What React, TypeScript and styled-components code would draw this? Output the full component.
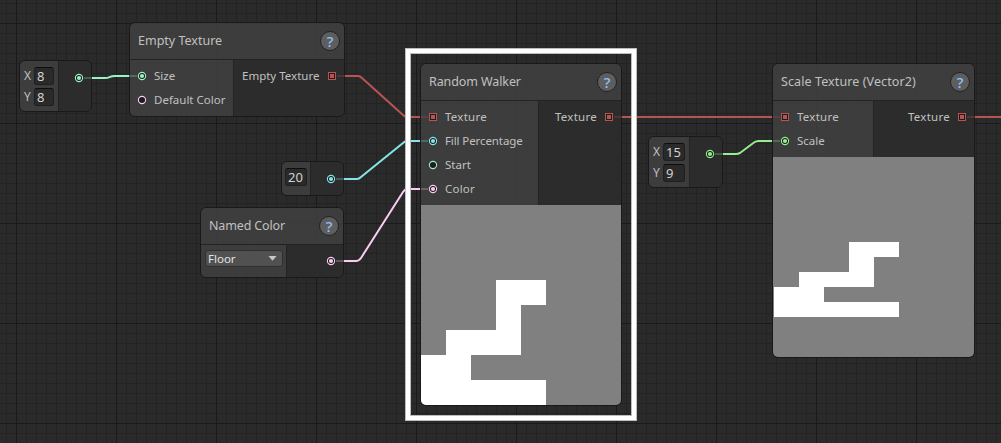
import React from "react";
import styled, { createGlobalStyle } from "styled-components";

const GlobalStyle = createGlobalStyle`
  *, *::before { box-sizing: border-box; }
  body { margin: 0; background: #292929; overflow: hidden; }
`;

const line = "#191919";

const Canvas = styled.main`
  position: relative;
  width: 1001px;
  height: 443px;
  overflow: hidden;
  font-family: "Noto Sans", "Open Sans", sans-serif;
  font-size: 11.5px;
  color: #c0c0c0;
  background-color: #2a2a2a;
  background-image:
    linear-gradient(90deg, #1a1a1a 1px, transparent 1px),
    linear-gradient(#1a1a1a 1px, transparent 1px),
    linear-gradient(90deg, #232323 1px, transparent 1px),
    linear-gradient(#232323 1px, transparent 1px);
  background-size: 100px 100px, 100px 100px, 10px 10px, 10px 10px;
  background-position: 16px 23px, 16px 23px, 6px 3px, 6px 3px;
`;

const Wires = styled.svg`
  position: absolute;
  inset: 0;
`;

const NodeBox = styled.section<{ $x: number; $y: number; $w: number; $h: number }>`
  position: absolute;
  left: ${(p) => p.$x}px;
  top: ${(p) => p.$y}px;
  width: ${(p) => p.$w}px;
  height: ${(p) => p.$h}px;
  display: flex;
  flex-direction: column;
  overflow: hidden;
  border: 1px solid ${line};
  border-radius: 6px;
`;

const Header = styled.header`
  display: flex;
  align-items: center;
  justify-content: space-between;
  flex: none;
  height: 37px;
  padding: 0 4px 0 8px;
  background: rgba(62, 62, 62, 0.93);
  border-bottom: 1px solid #232323;
`;

const Label = styled.span<{ $w: number; $size?: number; $track?: number }>`
  width: ${(p) => p.$w}px;
  font-size: ${(p) => p.$size ?? 11.5}px;
  letter-spacing: ${(p) => p.$track ?? 0}px;
  line-height: 16px;
  white-space: nowrap;
`;

const Help = styled.span`
  display: flex;
  align-items: center;
  justify-content: center;
  width: 20px;
  height: 20px;
  border: 1px solid #222;
  border-radius: 50%;
  background: #5e5e5e;
  color: #8fc0fb;
  font-size: 15px;
  font-weight: 500;
  line-height: 18px;
`;

const Body = styled.div<{ $h?: number }>`
  display: flex;
  flex: ${(p) => (p.$h ? `0 0 ${p.$h}px` : "1")};
`;

const Inputs = styled.div<{ $w: number; $pad?: string }>`
  display: flex;
  flex-direction: column;
  flex: none;
  width: ${(p) => p.$w}px;
  padding: ${(p) => p.$pad ?? "4px 0 0 7px"};
  background: rgba(62, 62, 62, 0.93);
  border-right: 1px solid #232323;
`;

const Outputs = styled.div<{ $top?: number }>`
  display: flex;
  flex-direction: column;
  align-items: flex-end;
  flex: 1;
  padding: ${(p) => p.$top ?? 4}px 7px 0 0;
  background: rgba(45, 45, 45, 0.96);
`;

const PortRow = styled.div`
  display: flex;
  align-items: center;
  gap: 7px;
  height: 24px;
`;

const PortIcon = styled.svg`
  display: block;
  flex: none;
  width: 10px;
  height: 10px;
`;

const Field = styled.span<{ $w: number }>`
  display: block;
  width: ${(p) => p.$w}px;
  height: 18px;
  padding-left: 2px;
  border: 1px solid #1f1f1f;
  border-top-color: #0d0d0d;
  border-radius: 3px;
  background: #2a2a2a;
  color: #d2d2d2;
  font-size: 13px;
  line-height: 17px;
`;

const FieldRow = styled.div`
  display: flex;
  align-items: flex-start;
  height: 21px;
`;

const Axis = styled.span`
  width: 10px;
  font-size: 12px;
  line-height: 18px;
`;

const Select = styled.div`
  display: flex;
  align-items: center;
  justify-content: space-between;
  width: 78px;
  height: 17px;
  padding: 0 5px 0 2px;
  border: 1px solid #303030;
  border-radius: 3px;
  background: #515151;
  color: #e4e4e4;
`;

const Preview = styled.svg`
  display: block;
  flex: none;
`;

const SelectionFrame = styled.div`
  position: absolute;
  left: 405px;
  top: 48px;
  width: 232px;
  height: 373px;
  border: 1px solid #bdbdbd;
  pointer-events: none;
  &::before {
    content: "";
    display: block;
    height: 100%;
    border: 4px solid #fff;
    outline: 1px solid #bdbdbd;
    outline-offset: -5px;
  }
`;

const red = "#b85353";
const cyan = "#84e4e7";
const mint = "#9cf0c6";
const pink = "#fbcbf4";
const green = "#95ed8d";

type PortProps = { color: string; square?: boolean; empty?: boolean };
type TextProps = { text: string; w: number; track?: number };

function Port({ color, square, empty }: PortProps) {
  return (
    <PortIcon viewBox="0 0 10 10">
      {square ? (
        <>
          <rect x="1.5" y="1.5" width="7" height="7" fill="#1d1d1d" stroke={color} />
          <rect x="3" y="3" width="4" height="4" fill={color} />
        </>
      ) : (
        <>
          <circle cx="5" cy="5" r="3.6" fill="#1d1d1d" stroke={color} strokeWidth="1.1" />
          {!empty && <circle cx="5" cy="5" r="2.1" fill={color} />}
        </>
      )}
    </PortIcon>
  );
}

function Title({ text, w, track }: TextProps) {
  return (
    <Header>
      <Label $w={w} $size={12.5} $track={track}>{text}</Label>
      <Help>?</Help>
    </Header>
  );
}

function Input({ text, w, track, ...port }: PortProps & TextProps) {
  return (
    <PortRow>
      <Port {...port} />
      <Label $w={w} $track={track}>{text}</Label>
    </PortRow>
  );
}

function Output({ text, w, track }: TextProps) {
  return (
    <PortRow>
      <Label $w={w} $track={track}>{text}</Label>
      <Port color={red} square />
    </PortRow>
  );
}

function VectorNode(p: { x: number; y: number; w: number; split: number; field: number; a: string; b: string; color: string; h: number }) {
  return (
    <NodeBox $x={p.x} $y={p.y} $w={p.w} $h={p.h}>
      <Body>
        <Inputs $w={p.split} $pad="6px 0 0 4px">
          <FieldRow><Axis>X</Axis><Field $w={p.field}>{p.a}</Field></FieldRow>
          <FieldRow><Axis>Y</Axis><Field $w={p.field}>{p.b}</Field></FieldRow>
        </Inputs>
        <Outputs $top={5}>
          <PortRow><Port color={p.color} /></PortRow>
        </Outputs>
      </Body>
    </NodeBox>
  );
}

const wires = [
  { color: mint, inside: "M84 78H92M129 76H137", main: "M92 78H105C110 78 109 76 115 76H129" },
  { color: red, inside: "M337 76H345M421 117H428", main: "M345 76H358Q360 76 362 78L403 115Q405 117 407 117H420" },
  { color: cyan, inside: "M336 179H344M421 141H428", main: "M344 179H357Q359 179 361 177L403 143Q405 141 407 141H420" },
  { color: pink, inside: "M336 261H344M421 189H428", main: "M344 261H356Q359 261 361 258L403 192Q405 189 407 189H420" },
  { color: red, inside: "M614 117H622M773 117H780M967 117H975", main: "M622 117H772M975 117H1001" },
  { color: green, inside: "M715 154H723M773 141H780", main: "M723 154H736Q738 154 740 153L754 142.500Q756 141 759 141H772" },
];

const walk: [number, number, number, number][] = [
  [3, 3, 2, 1],
  [3, 4, 1, 1],
  [1, 5, 3, 1],
  [0, 6, 2, 1],
  [0, 7, 5, 1],
];

function Walk({ width, left, top, cellHeight }: { width: number; left: number; top: number; cellHeight: number }) {
  return (
    <Preview width={width} height={200} shapeRendering="crispEdges">
      <rect width={width} height={200} fill="#808080" />
      {walk.map(([x, y, w, h]) => (
        <rect key={y} x={left + x * 25} y={top + y * cellHeight} width={w * 25} height={h * cellHeight} fill="#fff" />
      ))}
    </Preview>
  );
}

export default function App() {
  return (
    <>
      <GlobalStyle />
      <Canvas>
        <VectorNode x={19} y={60} w={73} h={52} split={39} field={20} a="8" b="8" color={mint} />

        <NodeBox $x={129} $y={22} $w={216} $h={95}>
          <Title text="Empty Texture" w={86} />
          <Body>
            <Inputs $w={104}>
              <Input text="Size" w={24} color={mint} />
              <Input text="Default Color" w={72} color={pink} empty />
            </Inputs>
            <Outputs><Output text="Empty Texture" w={78} /></Outputs>
          </Body>
        </NodeBox>

        <NodeBox $x={281} $y={161} $w={63} $h={35}>
          <Body>
            <Inputs $w={29} $pad="6px 0 0 3px"><Field $w={22}>20</Field></Inputs>
            <Outputs $top={5}><PortRow><Port color={cyan} /></PortRow></Outputs>
          </Body>
        </NodeBox>

        <NodeBox $x={200} $y={207} $w={144} $h={71}>
          <Title text="Named Color" w={77} track={-0.15} />
          <Body>
            <Inputs $w={86} $pad="5px 0 0 4px">
              <Select>
                Floor
                <svg width="9" height="5" viewBox="0 0 9 5"><path d="M0.500 0H8.500L4.500 4.800Z" fill="#c8c8c8" /></svg>
              </Select>
            </Inputs>
            <Outputs><PortRow><Port color={pink} /></PortRow></Outputs>
          </Body>
        </NodeBox>

        <NodeBox $x={420} $y={63} $w={202} $h={343}>
          <Title text="Random Walker" w={91} track={-0.1} />
          <Body $h={104}>
            <Inputs $w={118}>
              <Input text="Texture" w={42} track={0.25} color={red} square />
              <Input text="Fill Percentage" w={78} track={-0.1} color={cyan} />
              <Input text="Start" w={26} color={mint} empty />
              <Input text="Color" w={30} track={0.2} color={pink} />
            </Inputs>
            <Outputs><Output text="Texture" w={42} track={0.25} /></Outputs>
          </Body>
          <Walk width={200} left={0} top={0} cellHeight={25} />
        </NodeBox>

        <VectorNode x={648} y={136} w={75} h={52} split={41} field={22} a="15" b="9" color={green} />

        <NodeBox $x={772} $y={63} $w={203} $h={295}>
          <Title text="Scale Texture (Vector2)" w={136} track={0.1} />
          <Body $h={56}>
            <Inputs $w={101}>
              <Input text="Texture" w={42} track={0.25} color={red} square />
              <Input text="Scale" w={27} color={green} />
            </Inputs>
            <Outputs><Output text="Texture" w={42} track={0.25} /></Outputs>
          </Body>
          <Walk width={201} left={1} top={40} cellHeight={15} />
        </NodeBox>

        <Wires width="1001" height="443" fill="none">
          {wires.map((w) => (
            <g key={w.main} stroke={w.color}>
              <path d={w.inside} strokeWidth="2" opacity="0.25" />
              <path d={w.main} strokeWidth="2" />
            </g>
          ))}
        </Wires>

        <SelectionFrame />
      </Canvas>
    </>
  );
}
